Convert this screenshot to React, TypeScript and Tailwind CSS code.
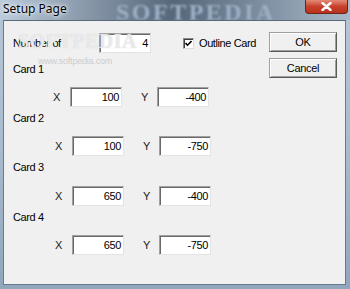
import React from 'react';

type Card = { name: string; x: string; y: string; shift: boolean };

const cards: Card[] = [
  { name: 'Card 1', x: '100', y: '-400', shift: false },
  { name: 'Card 2', x: '100', y: '-750', shift: true },
  { name: 'Card 3', x: '650', y: '-400', shift: true },
  { name: 'Card 4', x: '650', y: '-750', shift: true },
];

const ui = { fontFamily: '"Liberation Sans", Arial, sans-serif' };

function Field({ value }: { value: string }) {
  return (
    <div className="h-[20px] w-[52px] bg-white border border-t-[#a0a0a0] border-l-[#a0a0a0] border-b-[#e3e3e3] border-r-[#e3e3e3] shadow-[inset_1px_1px_0_#696969] flex items-center justify-end pr-[2px] text-[11px] tracking-[-0.4px] text-black">
      {value}
    </div>
  );
}

function Button({ label }: { label: string }) {
  return (
    <div className="h-[20px] w-[68px] bg-[#f0f0f0] border border-[#a0a0a0] border-b-[#5a5a5a] border-r-[#5a5a5a] shadow-[inset_1px_1px_0_#ffffff,inset_-1px_-1px_0_#a0a0a0] flex items-center justify-center text-[11px] tracking-[-0.3px] text-black">
      {label}
    </div>
  );
}

export default function App() {
  return (
    <div
      className="relative w-[350px] h-[289px] overflow-hidden bg-gradient-to-b from-[#b5c6d7] via-[#a9bccf] to-[#8fa6bd]"
      style={ui}
    >
      {/* title bar */}
      <div className="relative h-[20px] bg-gradient-to-r from-[#bccbdb] via-[#56677a] to-[#a8b9ca] overflow-hidden">
        <div
          className="absolute left-[116px] top-[0px] text-[24px] font-bold tracking-[2.5px] text-[#9db1c6] blur-[1px] leading-none"
          style={{ fontFamily: '"Liberation Serif", serif' }}
        >
          SOFTPEDIA
        </div>
        <div
          className="absolute left-[3px] top-[1px] text-[12px] text-black leading-[16px] [text-shadow:0_0_6px_#ffffff,0_0_3px_#ffffff]"
          style={{ fontFamily: '"Noto Sans", "Open Sans", sans-serif' }}
        >
          Setup Page
        </div>
        <div className="absolute right-[2px] top-0 w-[43px] h-[14px] rounded-b-[4px] bg-gradient-to-b from-[#e48a78] via-[#c7402a] to-[#b8321e] border border-t-0 border-[#6e2418] flex items-center justify-center">
          <svg width="11" height="9" viewBox="0 0 11 9">
            <path d="M1.5 1 L9.5 8 M9.5 1 L1.5 8" stroke="#ffffff" strokeWidth="2.4" strokeLinecap="round" />
          </svg>
        </div>
      </div>

      {/* client area */}
      <div className="relative ml-[3px] w-[343px] h-[265px] bg-[#f0f0f0] border border-[#6b7b8c] border-t-[#5a6a7a]">
        <div className="relative flex pt-[11px] pl-[9px] pr-[8px]">
          <div className="flex-1">
            <div className="flex items-center h-[22px] text-[11px] tracking-[-0.4px] text-black">
              <span className="w-[86px]">Number of</span>
              <Field value="4" />
              <div className="ml-[32px] w-[11px] h-[11px] bg-white border border-t-[#8a8a8a] border-l-[#8a8a8a] border-b-[#dcdcdc] border-r-[#dcdcdc] shadow-[inset_1px_1px_0_#404040] flex items-center justify-center">
                <svg width="7" height="7" viewBox="0 0 7 7">
                  <path d="M0.5 3 L2.5 5.2 L6.5 1" stroke="#000" strokeWidth="1.6" fill="none" />
                </svg>
              </div>
              <span className="ml-[5px]">Outline Card</span>
            </div>
          </div>
          <div className="flex flex-col gap-[6px]">
            <Button label="OK" />
            <Button label="Cancel" />
          </div>
        </div>

        <div className="relative -mt-[16px] pl-[9px] text-[11px] tracking-[-0.4px] text-black">
          {cards.map((c, i) => (
            <div key={c.name} className={i === 0 ? '' : 'mt-[4px]'}>
              <div className="h-[14px] leading-[14px]">{c.name}</div>
              <div className={`flex items-center ${i === 2 ? 'mt-[12px]' : 'mt-[11px]'} ${c.shift ? 'pl-[42px]' : 'pl-[40px]'}`}>
                <span className="w-[17px] text-[#202020]">X</span>
                <Field value={c.x} />
                <span className="w-[35px] pl-[19px] text-[#202020]">Y</span>
                <Field value={c.y} />
              </div>
            </div>
          ))}
        </div>

        {/* watermark overlay */}
        <div
          className="pointer-events-none absolute z-10 left-[14px] top-[10px] text-[20px] font-bold tracking-[0.5px] text-white/60 leading-none [text-shadow:0_0_1px_#c8c8c8]"
          style={{ fontFamily: '"Liberation Serif", serif' }}
        >
          SOFTPEDIA
        </div>
        <div className="pointer-events-none absolute z-10 left-[34px] top-[36px] text-[9px] text-[#cdcdcd] leading-none tracking-[-0.2px]">
          www.softpedia.com
        </div>
      </div>
    </div>
  );
}
